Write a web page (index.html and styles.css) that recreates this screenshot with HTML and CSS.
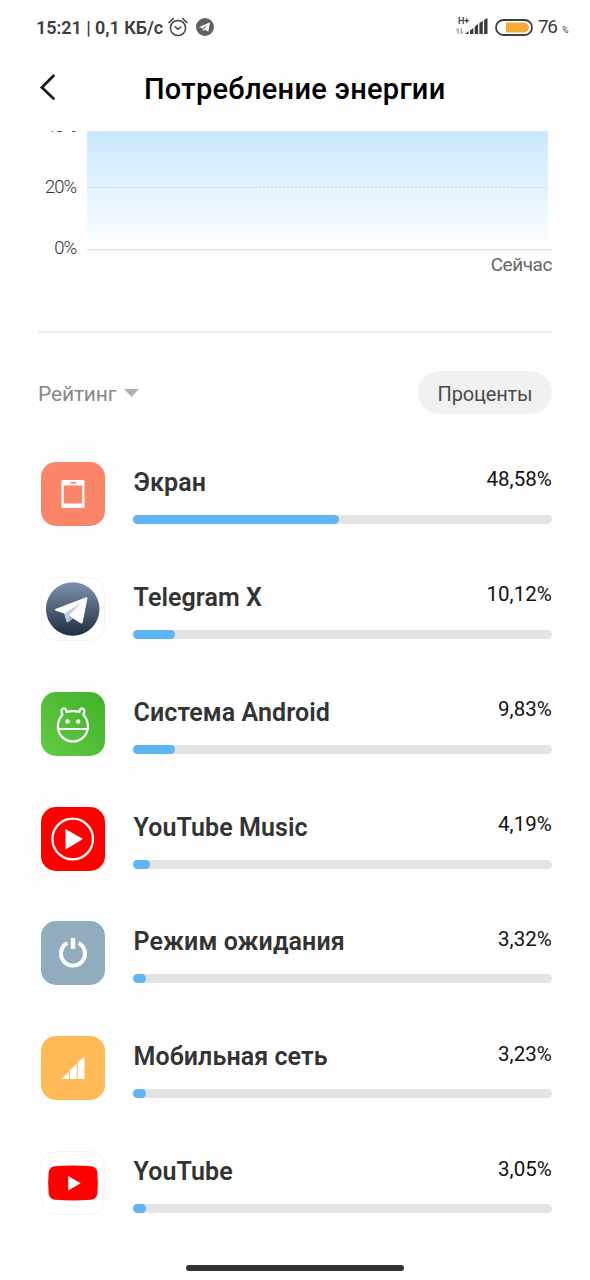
FILE: index.html
```html
<!DOCTYPE html>
<html lang="ru">
<head>
<meta charset="utf-8">
<title>Потребление энергии</title>
<link rel="stylesheet" href="styles.css">
</head>
<body>
<div class="screen">
  <div class="status">
    <span class="clock">15:21 | 0,1 КБ/с</span>
    <svg class="alarm" width="20" height="20" viewBox="0 0 20 20" fill="none" stroke="#444" stroke-width="1.5" stroke-linecap="round"><circle cx="10" cy="11" r="7.6"/><path d="M1 5.6 5.2 1.6M14.8 1.6 19 5.6M7.2 9.8 9.8 12.2 13 10"/></svg>
    <svg class="plane" width="18" height="18" viewBox="0 0 18 18"><circle cx="9" cy="9" r="9" fill="#606060"/><path d="M3 9.2 14 4.3 12.3 13.7 8.6 11.4 6.8 13.2 6.6 10.2Z" fill="#fff"/><path d="M6.9 10.2 11.8 6.4 7.8 11.3" fill="#606060"/></svg>
    <div class="signal">
      <span class="net">H+</span>
      <svg width="32" height="17" viewBox="0 0 32 17"><path d="M2 16V10.500L.3 12.5M5.200 10V15.500L7 13.500" fill="none" stroke="#777" stroke-width=".9"/><path d="M9 16 12.600 13V16ZM14 12.400 17.400 10V16H14ZM18.700 8.500 22.100 6V16H18.700ZM23.400 5 26.800 2.800V16H23.400ZM28.100 2 31.500 0V16H28.100Z" fill="#3c3c3c"/></svg>
    </div>
    <svg class="battery" width="38" height="17" viewBox="0 0 38 17"><rect x="1" y="1" width="36" height="15" rx="7.500" fill="#fff" stroke="#3d3d42" stroke-width="1.800"/><path d="M11 3.500H29a5 5 0 0 1 0 10H11Z" fill="#f5aa36"/></svg>
    <span class="level">76</span>
    <span class="pct">%</span>
  </div>

  <header class="header">
    <svg class="back" width="16" height="26" viewBox="0 0 16 26" fill="none" stroke="#1c1c1c" stroke-width="2.800" stroke-linecap="round"><path d="M14.500 1.800 2.900 13.500 14.500 24.500"/></svg>
    <h1 class="title">Потребление энергии</h1>
  </header>

  <section class="chart">
    <div class="axis">
      <span class="tick">40%</span>
      <span class="tick">20%</span>
      <span class="tick">0%</span>
    </div>
    <div class="plot">
      <div class="area"><div class="gridline"></div></div>
    </div>
  </section>
  <div class="now">Сейчас</div>
  <div class="divider"></div>

  <div class="filters">
    <span class="sort">Рейтинг</span>
    <svg class="caret" width="15" height="8" viewBox="0 0 15 8"><path d="M0 0H15L7.500 8Z" fill="#b0b0b0"/></svg>
    <span class="pill">Проценты</span>
  </div>

  <main class="list">
    <div class="row">
      <svg class="icon" viewBox="0 0 64 64"><rect width="64" height="64" rx="15" fill="#fa8569"/><rect x="20.500" y="18" width="23" height="28" rx="1.500" fill="#fff"/><rect x="22.800" y="23.500" width="18.400" height="18" fill="#fa8569"/><rect x="29" y="20" width="6.500" height="1.600" rx=".8" fill="#fa8569"/></svg>
      <div class="info"><div class="line"><span class="name">Экран</span><span class="value">48,58%</span></div><div class="bar"><div class="fill" style="width:205.500px"></div></div></div>
    </div>
    <div class="row">
      <svg class="icon" viewBox="0 0 64 64"><defs><linearGradient id="tg" x1="0" y1="0" x2="0" y2="1"><stop offset="0" stop-color="#7d93ad"/><stop offset="1" stop-color="#1f2e40"/></linearGradient></defs><rect x=".5" y=".5" width="63" height="63" rx="15" fill="#fff" stroke="#f3f3f3"/><circle cx="31.700" cy="32" r="26.800" fill="url(#tg)"/><path d="M14.300 32 45.300 20.300Q46.600 20 46.400 21.300L41.800 45Q41.300 47.300 39.100 46L31.800 41.200 27.300 45Q26.100 45.700 25.700 44.200L23.300 36.500 15 33.800Q13.300 33 14.300 32Z" fill="#fff"/><path d="M23.300 36.500 40.300 25.500 28.300 38.300 26.300 45.200Q25.900 45 25.700 44.200Z" fill="#c3cfde"/><path d="M28.300 38.300 31.800 41.200 27.300 45 26.100 45.300Z" fill="#a4b5c9"/></svg>
      <div class="info"><div class="line"><span class="name">Telegram X</span><span class="value">10,12%</span></div><div class="bar"><div class="fill" style="width:42px"></div></div></div>
    </div>
    <div class="row">
      <svg class="icon" viewBox="0 0 64 64"><defs><linearGradient id="an" x1="0" y1="1" x2="1" y2="0"><stop offset="0" stop-color="#63cb46"/><stop offset="1" stop-color="#42b02a"/></linearGradient></defs><rect width="64" height="64" rx="15" fill="url(#an)"/><g fill="none" stroke="#fff" stroke-width="2.200" stroke-linecap="round" stroke-linejoin="round"><path d="M25.500 19.800Q32 18.400 38.500 19.800Q39 15.800 41.500 16.500Q44.800 18 42.300 22.500Q46.900 28 46.900 34.500A15 15 0 0 1 16.900 34.500Q16.900 28 21.500 22.500Q19 18 22.300 16.500Q25 15.800 25.500 19.800Z"/><path d="M17 37H46.700"/></g><circle cx="26.500" cy="29.500" r="2.200" fill="#fff"/><circle cx="37.200" cy="29.500" r="2.200" fill="#fff"/></svg>
      <div class="info"><div class="line"><span class="name">Система Android</span><span class="value">9,83%</span></div><div class="bar"><div class="fill" style="width:42px"></div></div></div>
    </div>
    <div class="row">
      <svg class="icon" viewBox="0 0 64 64"><rect width="64" height="64" rx="15" fill="#fe0000"/><circle cx="31.700" cy="32" r="20.300" fill="none" stroke="#fff" stroke-width="2.300"/><path d="M24.500 22 42 32 24.500 42.500Z" fill="#fff"/></svg>
      <div class="info"><div class="line"><span class="name">YouTube Music</span><span class="value">4,19%</span></div><div class="bar"><div class="fill" style="width:17px"></div></div></div>
    </div>
    <div class="row">
      <svg class="icon" viewBox="0 0 64 64"><rect width="64" height="64" rx="15" fill="#92acbf"/><path d="M26.400 22A12 12 0 1 0 37.600 22" fill="none" stroke="#fff" stroke-width="4"/><path d="M29.800 17H34.200V28H29.800Z" fill="#fff"/></svg>
      <div class="info"><div class="line"><span class="name">Режим ожидания</span><span class="value">3,32%</span></div><div class="bar"><div class="fill" style="width:13px"></div></div></div>
    </div>
    <div class="row">
      <svg class="icon" viewBox="0 0 64 64"><rect width="64" height="64" rx="15" fill="#ffb957"/><path d="M20 43 27.900 35.700V43ZM28.900 34 35.800 28V43H28.900ZM36.800 26.300 43.500 20.500V43H36.800Z" fill="#fff"/></svg>
      <div class="info"><div class="line"><span class="name">Мобильная сеть</span><span class="value">3,23%</span></div><div class="bar"><div class="fill" style="width:13px"></div></div></div>
    </div>
    <div class="row">
      <svg class="icon" viewBox="0 0 64 64"><rect x=".5" y=".5" width="63" height="63" rx="15" fill="#fff" stroke="#f3f3f3"/><path d="M14 15.200Q32 14 50 15.200Q55.500 15.600 56.300 21Q57.400 32 56.300 43Q55.500 48.300 50 48.800Q32 50 14 48.800Q8.500 48.300 7.700 43Q6.600 32 7.700 21Q8.500 15.600 14 15.200Z" fill="#fe0000"/><path d="M27.200 25 39.700 32.200 27.200 39.500Z" fill="#fff"/></svg>
      <div class="info"><div class="line"><span class="name">YouTube</span><span class="value">3,05%</span></div><div class="bar"><div class="fill" style="width:13px"></div></div></div>
    </div>
  </main>
  <div class="home"></div>
</div>
</body>
</html>
```
FILE: styles.css
```css
* { box-sizing: border-box; }
body { margin: 0; background: #fefefe; font-family: Roboto, "Noto Sans", sans-serif; }
.screen { width: 590px; height: 1280px; overflow: hidden; display: flex; flex-direction: column; background: #fefefe; }
.status { height: 54px; flex: none; display: flex; align-items: center; padding-left: 36px; color: #3c3c3c; white-space: nowrap; }
.clock { width: 132px; font-size: 18px; font-weight: 600; line-height: 22px; padding-top: 2px; letter-spacing: -0.05px; }
.alarm { flex: none; }
.plane { flex: none; margin-left: 8px; }
.signal { width: 32px; margin-left: 242px; position: relative; height: 17px; margin-top: -1px; }
.signal svg { display: block; }
.net { position: absolute; left: 2px; top: -3px; font-size: 9px; line-height: 12px; font-weight: 600; }
.battery { flex: none; margin-left: 7px; }
.level { width: 24px; margin-left: 5px; font-size: 19px; line-height: 22px; letter-spacing: -1.500px; }
.pct { font-size: 9px; line-height: 10px; padding-top: 5px; }
.header { height: 77px; flex: none; display: flex; padding-left: 39px; }
.back { margin-top: 20px; flex: none; }
.title { margin: 17px 0 0 89px; font-size: 29px; line-height: 36px; font-weight: 500; letter-spacing: 0.28px; color: #000; white-space: nowrap; }
.chart { height: 120px; flex: none; display: flex; clip-path: inset(0 0 -20px 0); }
.axis { width: 76px; display: flex; flex-direction: column; justify-content: flex-end; flex: none; }
.tick { height: 22px; margin-bottom: 39px; flex: none; font-size: 18.500px; line-height: 22px; font-weight: 300; letter-spacing: -1.100px; text-align: right; color: #333; }
.tick:last-child { margin-bottom: -8px; }
.plot { width: 465px; margin-left: 11px; border-bottom: 2px solid #e6e6e6; }
.area { width: 461px; height: 118px; padding-top: 56px; background: linear-gradient(#c9e9fe, #fdfeff); }
.gridline { height: 1px; background: repeating-linear-gradient(90deg, #c5d8e8 0 2px, transparent 2px 4px); }
.now { width: 552px; flex: none; height: 80px; padding-top: 2px; text-align: right; font-size: 19px; line-height: 23px; letter-spacing: -0.45px; color: #666; }
.divider { width: 514px; height: 2px; flex: none; margin-left: 38px; background: #ebebeb; }
.filters { height: 121px; flex: none; display: flex; padding: 38px 38px 0; }
.sort { width: 86px; font-size: 21px; line-height: 46px; letter-spacing: -0.15px; color: #888; }
.caret { margin-top: 18px; flex: none; }
.pill { width: 134px; height: 43px; margin-left: auto; border-radius: 22px; background: #f1f1f1; font-size: 20px; line-height: 46px; letter-spacing: -0.15px; text-align: center; color: #4a4a4a; }
.list { padding: 7.700px 38px 0 40.500px; flex: none; }
.row { height: 114.940px; display: flex; }
.icon { width: 64px; height: 64px; flex: none; }
.info { flex: 1; margin-left: 28.500px; }
.line { height: 53px; display: flex; justify-content: space-between; white-space: nowrap; }
.name { margin-top: 6px; margin-left: .6px; font-size: 25px; line-height: 30px; font-weight: 600; letter-spacing: 0.08px; color: #333; }
.value { margin-top: 5.300px; margin-right: .3px; font-size: 20.500px; line-height: 25px; color: #111; }
.bar { height: 9px; border-radius: 5px; background: #e3e3e3; }
.fill { height: 9px; border-radius: 5px; background: #5db5f3; }
.home { width: 218px; height: 6px; flex: none; margin-left: 186px; margin-top: -1.300px; border-radius: 3px; background: #333; }
```
